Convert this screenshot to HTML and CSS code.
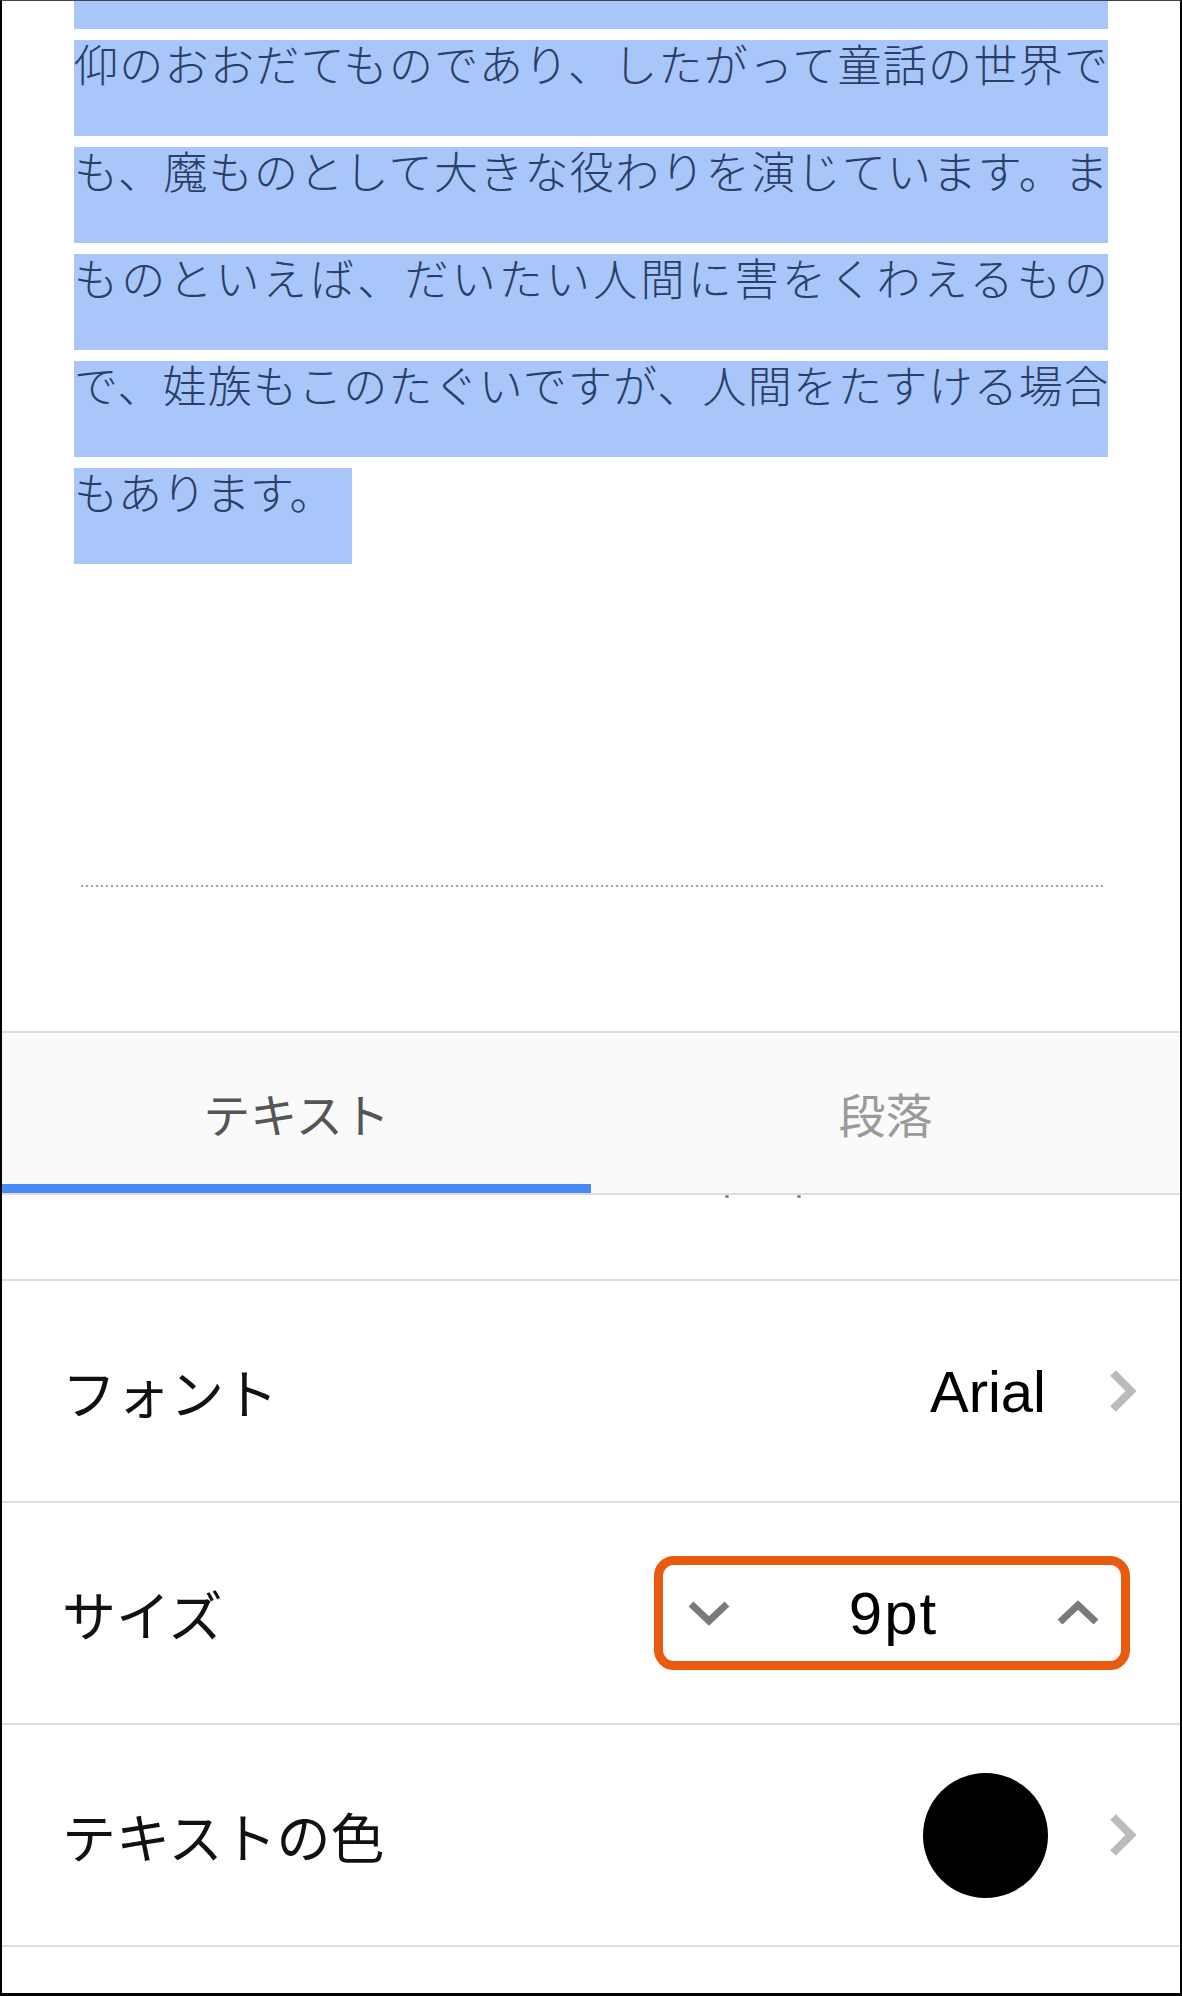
FILE: index.html
```html
<!DOCTYPE html>
<html lang="ja">
<head>
<meta charset="utf-8">
<title>テキスト書式</title>
<link rel="stylesheet" href="styles.css">
</head>
<body>
<div class="frame">
  <section class="doc">
    <div class="sel sel-cut"></div>
    <p class="sel">仰のおおだてものであり、したがって童話の世界で</p>
    <p class="sel">も、魔ものとして大きな役わりを演じています。ま</p>
    <p class="sel">ものといえば、だいたい人間に害をくわえるもの</p>
    <p class="sel">で、娃族もこのたぐいですが、人間をたすける場合</p>
    <p class="sel sel-last">もあります。</p>
    <div class="pagebreak"></div>
  </section>

  <nav class="tabs">
    <div class="tab active">テキスト</div>
    <div class="tab">段落</div>
  </nav>

  <div class="peek"><span class="dot"></span><span class="dot"></span></div>

  <div class="row">
    <span class="label">フォント</span>
    <span class="value">Arial</span>
    <svg class="chev" width="28" height="44" viewBox="0 0 28 44"><polyline points="4,4 22,22 4,40" fill="none" stroke="#bbbbbb" stroke-width="8"/></svg>
  </div>

  <div class="row">
    <span class="label">サイズ</span>
    <div class="stepper">
      <svg width="44" height="26" viewBox="0 0 44 26"><polyline points="4,4 22,21 40,4" fill="none" stroke="#7a7a7a" stroke-width="7"/></svg>
      <span class="num">9pt</span>
      <svg width="44" height="26" viewBox="0 0 44 26"><polyline points="4,22 22,5 40,22" fill="none" stroke="#7a7a7a" stroke-width="7"/></svg>
    </div>
  </div>

  <div class="row row-last">
    <span class="label">テキストの色</span>
    <span class="swatch"></span>
    <svg class="chev" width="28" height="44" viewBox="0 0 28 44"><polyline points="4,4 22,22 4,40" fill="none" stroke="#bbbbbb" stroke-width="8"/></svg>
  </div>
</div>
</body>
</html>
```

FILE: styles.css
```css
* { box-sizing: border-box; }

html, body {
  margin: 0;
  padding: 0;
  background: #ffffff;
}

body {
  width: 1182px;
  height: 1996px;
  overflow: hidden;
  font-family: "Noto Sans CJK JP", "Noto Sans", sans-serif;
}

.frame {
  width: 1182px;
  height: 1996px;
  border: 2px solid #000;
  border-top: 1px solid #444;
  border-bottom-width: 3px;
  display: flex;
  flex-direction: column;
  background: #fff;
  overflow: hidden;
}

/* document area */
.doc {
  height: 1030px;
  flex: none;
  padding: 0 72px;
  display: flex;
  flex-direction: column;
  gap: 11px;
}

.sel {
  margin: 0;
  height: 96px;
  flex: none;
  background: #a8c6fa;
  color: #2b3e66;
  font-size: 44px;
  font-weight: 300;
  line-height: 47px;
  text-align: justify;
  text-align-last: justify;
}

.sel-cut {
  height: 28px;
}

.sel-last {
  width: fit-content;
  padding-right: 18px;
  text-align: left;
  text-align-last: left;
}

.pagebreak {
  margin: 310px 4px 0 7px;
  height: 2px;
  background: repeating-linear-gradient(to right, #a3a3a3 0 2px, transparent 2px 5px);
}

/* tabs */
.tabs {
  flex: none;
  display: flex;
  background: #fafafa;
  border-top: 2px solid #dcdcdc;
  border-bottom: 2px solid #dedede;
}

.tab {
  flex: 1;
  height: 160px;
  padding-top: 8px;
  display: flex;
  align-items: center;
  justify-content: center;
  font-size: 47px;
  color: #9a9a9a;
  border-bottom: 9px solid transparent;
}

.tab.active {
  color: #555555;
  border-bottom-color: #4a8af4;
}

/* partially scrolled row */
.peek {
  flex: none;
  height: 84px;
  display: flex;
  align-items: flex-start;
  gap: 68px;
  padding-left: 723px;
}

.dot {
  width: 4px;
  height: 3px;
  border-radius: 2px;
  background: #8a8a8a;
}

/* settings rows */
.row {
  flex: none;
  height: 222px;
  border-top: 2px solid #dedede;
  display: flex;
  align-items: center;
  padding: 0 43px 0 60px;
}

.row-last {
  height: 224px;
  border-bottom: 2px solid #dedede;
}

.label {
  flex: 1;
  font-size: 54px;
  color: #111111;
}

.value {
  font-family: "Liberation Sans", Arial, sans-serif;
  font-size: 58px;
  color: #000;
  margin-right: 63px;
}

.chev {
  flex: none;
  display: block;
}

.stepper {
  flex: none;
  width: 476px;
  height: 114px;
  margin-right: 7px;
  border: 9px solid #e85a0e;
  border-radius: 20px;
  display: flex;
  align-items: center;
  justify-content: space-between;
  padding: 0 21px 0 24px;
}

.stepper svg {
  display: block;
}

.num {
  font-family: "Liberation Sans", Arial, sans-serif;
  font-size: 60px;
  letter-spacing: 2px;
  color: #000;
}

.swatch {
  flex: none;
  width: 125px;
  height: 125px;
  border-radius: 50%;
  background: #000;
  margin-right: 61px;
}
```
